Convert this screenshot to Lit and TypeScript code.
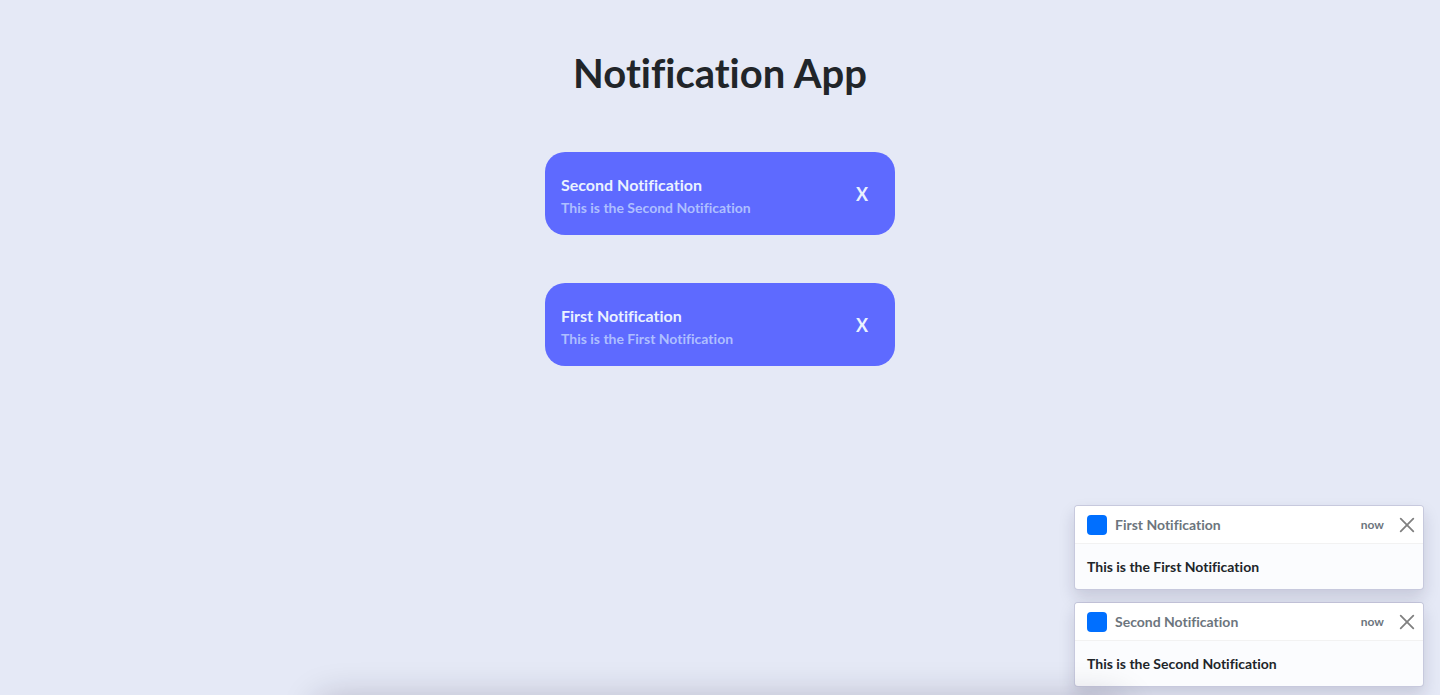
import { LitElement, html, css } from "lit";
import { customElement, property, state } from "lit/decorators.js";

interface Notice {
  id: number;
  title: string;
  text: string;
}

@customElement("notice-card")
class NoticeCard extends LitElement {
  @property() heading = "";
  @property() text = "";

  static styles = css`
    :host {
      display: block;
      width: 100%;
      max-width: 350px;
    }
    .card {
      box-sizing: border-box;
      display: flex;
      align-items: center;
      justify-content: space-between;
      padding: 21px 16px 16px;
      border-radius: 20px;
      background: #5e6aff;
      color: #eaf2ff;
    }
    .title {
      margin: 0;
      font-size: 16px;
      line-height: 24px;
      font-weight: 700;
    }
    .text {
      margin: 0;
      font-size: 14px;
      line-height: 22px;
      font-weight: 700;
      color: #aebfff;
    }
    .close {
      width: 34px;
      padding: 0 0 4px;
      border: 0;
      background: none;
      color: inherit;
      font: inherit;
      font-size: 18px;
      line-height: 24px;
      font-weight: 700;
      cursor: pointer;
    }
  `;

  render() {
    return html`
      <article class="card">
        <div>
          <h2 class="title">${this.heading}</h2>
          <p class="text">${this.text}</p>
        </div>
        <button class="close" @click=${() => this.dispatchEvent(new CustomEvent("dismiss"))}>X</button>
      </article>
    `;
  }
}

@customElement("notice-toast")
class NoticeToast extends LitElement {
  @property() heading = "";
  @property() text = "";

  static styles = css`
    :host {
      display: block;
    }
    .toast {
      border: 1px solid rgba(30, 20, 80, 0.15);
      border-radius: 4px;
      background: rgba(255, 255, 255, 0.85);
      background-clip: padding-box;
      box-shadow: 0 8px 16px rgba(30, 20, 60, 0.15);
      overflow: hidden;
      font-size: 14px;
      line-height: 21px;
      font-weight: 700;
    }
    .head {
      display: flex;
      align-items: center;
      padding: 8px 8px 8px 12px;
      border-bottom: 1px solid rgba(0, 0, 0, 0.05);
      background: rgba(255, 255, 255, 0.85);
      color: #6c757d;
    }
    .mark {
      width: 20px;
      height: 20px;
      margin-right: 8px;
      border-radius: 4px;
      background: #006fff;
    }
    .title {
      margin-right: auto;
    }
    .time {
      margin-right: 15px;
      font-size: 12px;
      line-height: 20px;
    }
    .close {
      display: flex;
      padding: 0;
      border: 0;
      background: none;
      color: #808080;
      cursor: pointer;
    }
    .body {
      padding: 12px;
      color: #212529;
    }
  `;

  render() {
    return html`
      <div class="toast" role="status">
        <div class="head">
          <span class="mark"></span>
          <span class="title">${this.heading}</span>
          <small class="time">now</small>
          <button
            class="close"
            aria-label="Close"
            @click=${() => this.dispatchEvent(new CustomEvent("dismiss"))}
          >
            <svg width="16" height="16" viewBox="0 0 16 16" fill="none" stroke="currentColor" stroke-width="1.8" stroke-linecap="round">
              <path d="M1.7 1.7 14.3 14.3M14.3 1.7 1.7 14.3" />
            </svg>
          </button>
        </div>
        <div class="body">${this.text}</div>
      </div>
    `;
  }
}

@customElement("app-root")
class AppRoot extends LitElement {
  @state() private notices: Notice[] = [
    { id: 2, title: "Second Notification", text: "This is the Second Notification" },
    { id: 1, title: "First Notification", text: "This is the First Notification" },
  ];
  @state() private toasts: Notice[] = [...this.notices].reverse();

  static styles = css`
    :host {
      display: block;
      position: relative;
      box-sizing: border-box;
      min-height: 100vh;
      overflow: hidden;
      background: #e5e9f6;
      font-family: Lato, sans-serif;
      font-variant-ligatures: none;
    }
    .page {
      display: flex;
      flex-direction: column;
      align-items: center;
      padding: 49px 16px;
    }
    .heading {
      margin: 0 0 55px;
      font-size: 40px;
      line-height: 48px;
      font-weight: 700;
      color: #212529;
      text-align: center;
    }
    .list {
      display: flex;
      flex-direction: column;
      align-items: center;
      gap: 48px;
      width: 100%;
    }
    .toasts {
      position: absolute;
      right: 16px;
      bottom: 8px;
      display: flex;
      flex-direction: column;
      gap: 12px;
      width: 350px;
      max-width: calc(100% - 32px);
    }
    .shade {
      position: absolute;
      left: 22%;
      right: 22%;
      bottom: -44px;
      height: 40px;
      border-radius: 12px;
      box-shadow: 0 0 36px rgba(20, 10, 40, 0.24);
      pointer-events: none;
    }
  `;

  render() {
    return html`
      <main class="page">
        <h1 class="heading">Notification App</h1>
        <div class="list">
          ${this.notices.map(
            (n) => html`<notice-card
              .heading=${n.title}
              .text=${n.text}
              @dismiss=${() => (this.notices = this.notices.filter((o) => o !== n))}
            ></notice-card>`
          )}
        </div>
      </main>
      <aside class="toasts">
        ${this.toasts.map(
          (n) => html`<notice-toast
            .heading=${n.title}
            .text=${n.text}
            @dismiss=${() => (this.toasts = this.toasts.filter((o) => o !== n))}
          ></notice-toast>`
        )}
      </aside>
      <div class="shade"></div>
    `;
  }
}
